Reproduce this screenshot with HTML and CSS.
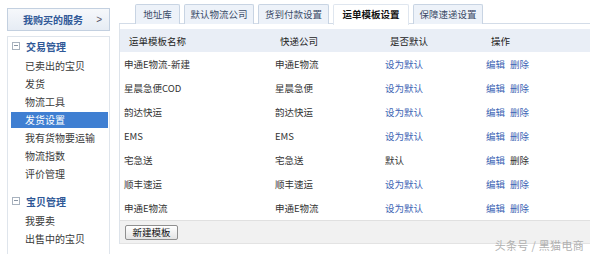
FILE: index.html
```html
<!DOCTYPE html>
<html>
<head>
<meta charset="utf-8">
<link rel="stylesheet" href="styles.css">
</head>
<body>
<div class="page">
  <aside class="sidebar">
    <div class="svc-btn"><span class="svc-text">我购买的服务</span><span class="svc-arrow">&gt;</span></div>
    <div class="menu">
      <div class="group-head"><span class="toggle"></span>交易管理</div>
      <div class="item">已卖出的宝贝</div>
      <div class="item">发货</div>
      <div class="item">物流工具</div>
      <div class="item selected">发货设置</div>
      <div class="item">我有货物要运输</div>
      <div class="item">物流指数</div>
      <div class="item">评价管理</div>
      <div class="group-head second"><span class="toggle"></span>宝贝管理</div>
      <div class="item">我要卖</div>
      <div class="item">出售中的宝贝</div>
    </div>
  </aside>
  <main class="main">
    <div class="tabs">
      <div class="tab w1">地址库</div>
      <div class="tab w2">默认物流公司</div>
      <div class="tab w3">货到付款设置</div>
      <div class="tab w4 active">运单模板设置</div>
      <div class="tab w5">保障速递设置</div>
    </div>
    <div class="panel">
      <div class="row head">
        <div class="c1">运单模板名称</div>
        <div class="c2">快递公司</div>
        <div class="c3">是否默认</div>
        <div class="c4">操作</div>
      </div>
      <div class="row">
        <div class="c1">申通E物流-新建</div>
        <div class="c2">申通E物流</div>
        <div class="c3"><span class="link">设为默认</span></div>
        <div class="c4"><span class="link">编辑</span><span class="link del">删除</span></div>
      </div>
      <div class="row">
        <div class="c1">星晨急便COD</div>
        <div class="c2">星晨急便</div>
        <div class="c3"><span class="link">设为默认</span></div>
        <div class="c4"><span class="link">编辑</span><span class="link del">删除</span></div>
      </div>
      <div class="row">
        <div class="c1">韵达快运</div>
        <div class="c2">韵达快运</div>
        <div class="c3"><span class="link">设为默认</span></div>
        <div class="c4"><span class="link">编辑</span><span class="link del">删除</span></div>
      </div>
      <div class="row">
        <div class="c1">EMS</div>
        <div class="c2">EMS</div>
        <div class="c3"><span class="link">设为默认</span></div>
        <div class="c4"><span class="link">编辑</span><span class="link del">删除</span></div>
      </div>
      <div class="row">
        <div class="c1">宅急送</div>
        <div class="c2">宅急送</div>
        <div class="c3">默认</div>
        <div class="c4"><span class="link">编辑</span><span class="del plain">删除</span></div>
      </div>
      <div class="row">
        <div class="c1">顺丰速运</div>
        <div class="c2">顺丰速运</div>
        <div class="c3"><span class="link">设为默认</span></div>
        <div class="c4"><span class="link">编辑</span><span class="link del">删除</span></div>
      </div>
      <div class="row">
        <div class="c1">申通E物流</div>
        <div class="c2">申通E物流</div>
        <div class="c3"><span class="link">设为默认</span></div>
        <div class="c4"><span class="link">编辑</span><span class="link del">删除</span></div>
      </div>
      <div class="footer">
        <button class="new-btn">新建模板</button>
      </div>
    </div>
  </main>
  <div class="watermark">头条号 / 黑猫电商</div>
</div>
</body>
</html>
```

FILE: styles.css
```css
* { box-sizing: border-box; }
html, body {
  margin: 0;
  padding: 0;
  background: #fff;
}
body {
  font-family: "Noto Sans CJK SC", "Noto Sans", sans-serif;
  color: #333;
  width: 590px;
  height: 254px;
  overflow: hidden;
}
.page {
  position: relative;
  display: flex;
  align-items: flex-start;
  height: 254px;
}
.sidebar {
  width: 103px;
  margin-left: 7px;
  margin-top: 8px;
  flex: none;
}
.svc-btn {
  height: 23px;
  border: 1px solid #c3d0e0;
  background: linear-gradient(#f6f8fb, #e6ecf4);
  display: flex;
  align-items: center;
  padding-left: 15px;
  padding-right: 7px;
  font-size: 10px;
  font-weight: bold;
  color: #2f5897;
}
.svc-text { flex: 1; }
.svc-arrow { font-weight: normal; font-family: "Liberation Sans", sans-serif; font-size: 10px; color: #556; }
.menu {
  margin-top: 5px;
  border: 1px solid #dfe5ec;
  border-bottom: none;
  height: 230px;
  font-size: 10px;
}
.group-head {
  display: flex;
  align-items: center;
  height: 18px;
  margin-bottom: 3px;
  padding-left: 4px;
  color: #2f5897;
  font-weight: bold;
}
.group-head.second { margin-top: 10px; }
.toggle {
  width: 8px;
  height: 8px;
  border: 1px solid #a8b2be;
  position: relative;
  margin-right: 6px;
  flex: none;
}
.toggle::after {
  content: "";
  position: absolute;
  left: 1px;
  right: 1px;
  top: 2px;
  height: 1px;
  background: #8a95a3;
}
.item {
  height: 16px;
  line-height: 16px;
  margin: 2px 1px 2px 3px;
  padding-left: 14px;
  color: #3a3a3a;
}
.item.selected {
  background: #3f7fd2;
  color: #fff;
}
.main {
  flex: 1;
  margin-left: 9px;
  margin-top: 4px;
}
.tabs {
  display: flex;
  gap: 4px;
  padding-left: 16px;
  height: 20px;
  border-bottom: 1px solid #d3dce8;
}
.tab {
  height: 20px;
  line-height: 18px;
  border: 1px solid #c8d4e3;
  border-bottom: none;
  background: #edf2f9;
  text-align: center;
  font-size: 9.5px;
  color: #3a4a66;
  border-radius: 2px 2px 0 0;
}
.tab.active {
  height: 21px;
  background: #fff;
  color: #111;
  font-weight: bold;
  border-color: #dfe6ef;
}
.w1 { width: 45px; }
.w2 { width: 70px; }
.w3 { width: 71px; }
.w4 { width: 76px; }
.w5 { width: 70px; }
.panel {
  border-left: 1px solid #dde3ea;
  padding-top: 5px;
  font-size: 9.5px;
}
.row {
  display: grid;
  grid-template-columns: 151px 110px 101px 1fr;
  height: 24px;
  align-items: center;
}
.row > div { padding-left: 4px; }
.row.head {
  height: 23px;
  background: #e9eef6;
  color: #222;
}
.row.head > div { padding-left: 9px; }
.link { color: #3c64b4; }
.del { margin-left: 5px; }
.plain { color: #333; }
.footer {
  height: 24px;
  background: #f1f1f1;
  border-top: 1px solid #e0e0e0;
  border-bottom: 1px solid #e3e3e3;
  display: flex;
  align-items: center;
  padding-left: 5px;
}
.new-btn {
  width: 53px;
  height: 15px;
  padding: 0;
  font-family: "Noto Sans CJK SC", sans-serif;
  font-size: 9.5px;
  line-height: 13px;
  color: #111;
  border: 1px solid #8f8f8f;
  border-radius: 2px;
  background: linear-gradient(#ffffff, #e4e4e4);
}
.watermark {
  position: absolute;
  right: 6px;
  bottom: 1px;
  font-size: 11px;
  color: #b0b0b0;
  letter-spacing: 0.3px;
}
```
